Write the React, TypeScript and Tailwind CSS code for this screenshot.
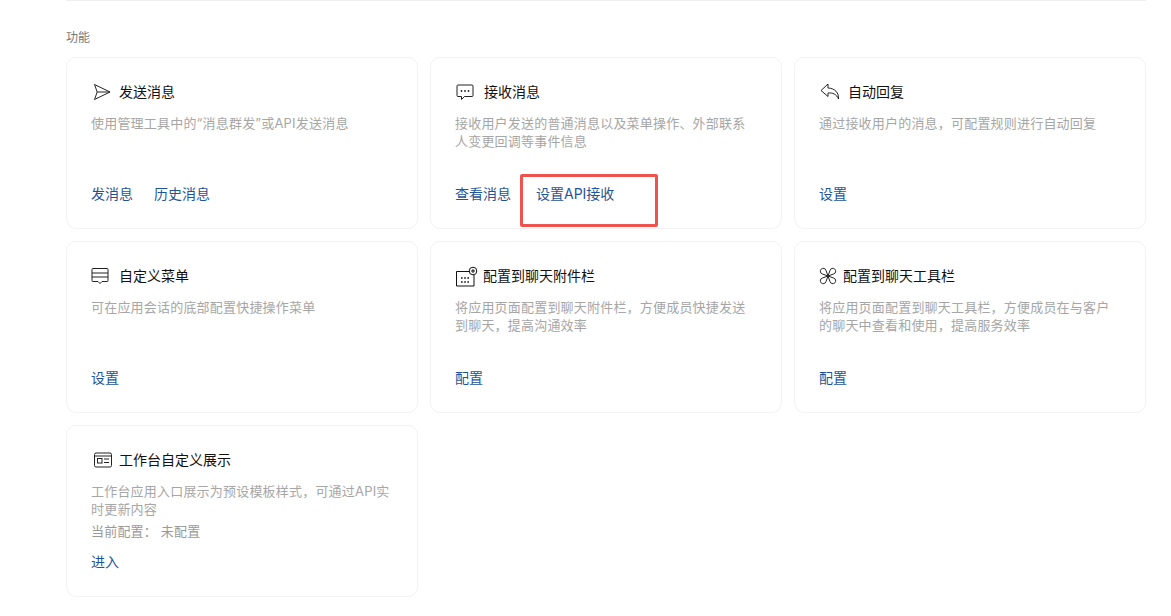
import { ReactNode } from "react";

type Feature = {
  title: string;
  desc: string[];
  icon: ReactNode;
  iconWidth: string;
  links: string[];
  linkGap: string;
  extra?: string;
};

const SendIcon = () => (
  <svg width="18" height="18" viewBox="0 0 18 18" fill="none" stroke="#222" strokeWidth="1">
    <path d="M1.5 1.5 L17 9 L1.5 16.5 L4.2 9 Z" strokeLinejoin="round" />
    <path d="M4.2 9 H17" />
  </svg>
);

const ChatIcon = () => (
  <svg width="18" height="18" viewBox="0 0 18 18" fill="none" stroke="#222" strokeWidth="1">
    <path
      d="M2 2 H16 A1 1 0 0 1 17 3 V12.5 A1 1 0 0 1 16 13.5 H8.5 L5.5 16.5 V13.5 H2 A1 1 0 0 1 1 12.5 V3 A1 1 0 0 1 2 2 Z"
      strokeLinejoin="round"
    />
    <circle cx="5.5" cy="8" r="0.9" fill="#222" stroke="none" />
    <circle cx="9" cy="8" r="0.9" fill="#222" stroke="none" />
    <circle cx="12.5" cy="8" r="0.9" fill="#222" stroke="none" />
  </svg>
);

const ReplyIcon = () => (
  <svg width="20" height="18" viewBox="0 0 20 18" fill="none" stroke="#222" strokeWidth="1">
    <path d="M8 1 L1 7.5 L8 13.5 V10 C12.5 9.6 16.5 11 18.5 16 C19 10 15 5.2 8 5 Z" strokeLinejoin="round" />
  </svg>
);

const MenuIcon = () => (
  <svg width="18" height="18" viewBox="0 0 18 18" fill="none" stroke="#222" strokeWidth="1">
    <path
      d="M2 1.5 H16 A1 1 0 0 1 17 2.5 V13.5 A1 1 0 0 1 16 14.5 H11 L9 16.5 L7 14.5 H2 A1 1 0 0 1 1 13.5 V2.5 A1 1 0 0 1 2 1.5 Z"
      strokeLinejoin="round"
    />
    <path d="M1 6 H17 M1 10 H17" />
  </svg>
);

const AttachIcon = () => (
  <svg width="22" height="21" viewBox="0 0 22 21" fill="none" stroke="#111" strokeWidth="1">
    <path d="M13.5 5.5 H0.5 V20 H18 V9" />
    <circle cx="17" cy="5" r="3.8" />
    <path d="M15 5 H19 M17 3 V7" />
    <path d="M5 12 H6.6 M8.2 12 H9.8 M11.4 12 H13 M5 16 H6.6 M8.2 16 H9.8 M11.4 16 H13" strokeWidth="1.7" />
  </svg>
);

const ToolIcon = () => (
  <svg width="18" height="18" viewBox="0 0 18 18" fill="none" stroke="#222" strokeWidth="1">
    <path d="M9 9 L3.4 7 A2.9 2.9 0 1 1 7 3.4 Z" strokeLinejoin="round" />
    <path d="M9 9 L14.6 7 A2.9 2.9 0 1 0 11 3.4 Z" strokeLinejoin="round" />
    <path d="M9 9 L3.4 11 A2.9 2.9 0 1 0 7 14.6 Z" strokeLinejoin="round" />
    <path d="M9 9 L14.6 11 A2.9 2.9 0 1 1 11 14.6 Z" strokeLinejoin="round" />
  </svg>
);

const PanelIcon = () => (
  <svg width="18" height="16" viewBox="0 0 18 16" fill="none" stroke="#222" strokeWidth="1">
    <rect x="0.5" y="1" width="17" height="14" rx="1.5" />
    <path d="M0.5 4 H17.5" />
    <rect x="3.5" y="6.5" width="4.5" height="4.5" />
    <path d="M10 7 H15 M10 10.5 H15" />
  </svg>
);

const features: Feature[] = [
  {
    title: "发送消息",
    desc: ["使用管理工具中的“消息群发”或API发送消息"],
    icon: <SendIcon />,
    iconWidth: "w-[28px] pl-[2px]",
    links: ["发消息", "历史消息"],
    linkGap: "gap-[21px]",
  },
  {
    title: "接收消息",
    desc: ["接收用户发送的普通消息以及菜单操作、外部联系", "人变更回调等事件信息"],
    icon: <ChatIcon />,
    iconWidth: "w-[29px] pl-[1px]",
    links: ["查看消息", "设置API接收"],
    linkGap: "gap-[25px]",
  },
  {
    title: "自动回复",
    desc: ["通过接收用户的消息，可配置规则进行自动回复"],
    icon: <ReplyIcon />,
    iconWidth: "w-[29px] pl-[1px]",
    links: ["设置"],
    linkGap: "gap-[21px]",
  },
  {
    title: "自定义菜单",
    desc: ["可在应用会话的底部配置快捷操作菜单"],
    icon: <MenuIcon />,
    iconWidth: "w-[28px]",
    links: ["设置"],
    linkGap: "gap-[21px]",
  },
  {
    title: "配置到聊天附件栏",
    desc: ["将应用页面配置到聊天附件栏，方便成员快捷发送", "到聊天，提高沟通效率"],
    icon: <AttachIcon />,
    iconWidth: "w-[28px] pl-[1px]",
    links: ["配置"],
    linkGap: "gap-[21px]",
  },
  {
    title: "配置到聊天工具栏",
    desc: ["将应用页面配置到聊天工具栏，方便成员在与客户", "的聊天中查看和使用，提高服务效率"],
    icon: <ToolIcon />,
    iconWidth: "w-[24px]",
    links: ["配置"],
    linkGap: "gap-[21px]",
  },
  {
    title: "工作台自定义展示",
    desc: ["工作台应用入口展示为预设模板样式，可通过API实", "时更新内容"],
    icon: <PanelIcon />,
    iconWidth: "w-[28px] pl-[3px]",
    links: ["进入"],
    linkGap: "gap-[21px]",
    extra: "当前配置： 未配置",
  },
];

const Card = ({ item }: { item: Feature }) => (
  <div className="flex h-[172px] flex-col rounded-[10px] border border-[#f2f2f2] bg-white pb-[24px] pl-[24px] pr-[20px] pt-[24px]">
    <div className="flex h-5 items-center text-sm text-[#111]">
      <span className={`flex shrink-0 items-center ${item.iconWidth}`}>{item.icon}</span>
      <span>{item.title}</span>
    </div>
    <div className="mt-[12px] text-[13px] leading-[18px] tracking-[0.2px] text-[#a6a6a6]">
      {item.desc.map((line) => (
        <div key={line} className="whitespace-nowrap">
          {line}
        </div>
      ))}
    </div>
    {item.extra && (
      <div className="mt-[4px] whitespace-pre text-[13px] leading-[18px] tracking-[0.2px] text-[#999]">{item.extra}</div>
    )}
    <div className={`mt-auto flex h-5 items-center text-sm text-[#1f5596] ${item.linkGap}`}>
      {item.links.map((link) => (
        <span key={link}>{link}</span>
      ))}
    </div>
  </div>
);

const App = () => {
  return (
    <div className="relative h-[616px] w-[1171px] overflow-hidden bg-white font-['Inter','Noto_Sans_CJK_SC',sans-serif]">
      <div className="ml-[66px] mr-[25px] h-px bg-[#eeeeee]" />
      <section className="pl-[66px] pr-[25px]">
        <div className="mt-[29px] h-4 text-xs leading-4 text-[#777]">功能</div>
        <div className="mt-[11px] grid grid-cols-3 gap-3">
          {features.map((item) => (
            <Card key={item.title} item={item} />
          ))}
        </div>
      </section>
      {/* 标注框 */}
      <div className="absolute left-[520px] top-[174px] h-[53px] w-[138px] rounded-[2px] border-[3px] border-[#ee5350]" />
    </div>
  );
};

export default App;
